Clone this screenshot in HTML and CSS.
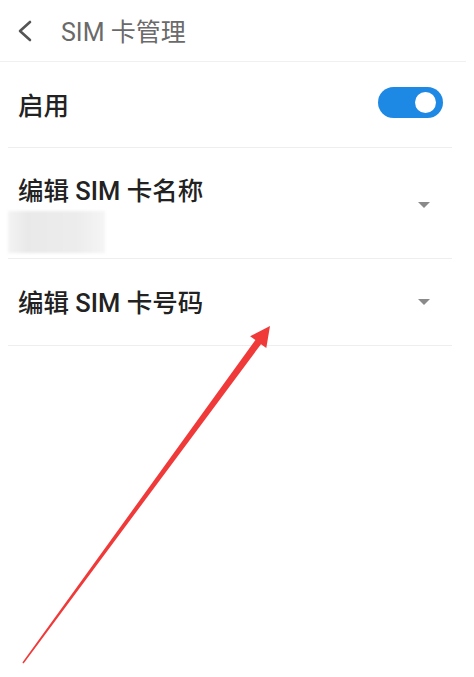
FILE: index.html
```html
<!DOCTYPE html>
<html lang="zh-CN">
<head>
  <meta charset="UTF-8" />
  <meta name="viewport" content="width=device-width, initial-scale=1.0"/>
  <title>SIM 卡管理</title>
  <link rel="stylesheet" href="styles.css">
</head>
<body>
  <div class="header">
    <svg class="back-icon" width="16" height="22" viewBox="0 0 16 22">
      <path d="M13 2 L3 11 L13 20" fill="none" stroke="#555" stroke-width="2.6" stroke-linecap="round" stroke-linejoin="round"/>
    </svg>
    <span class="header-title">SIM 卡管理</span>
  </div>

  <div class="list">
    <div class="row row-switch">
      <span class="row-label">启用</span>
      <div class="switch on"><span class="knob"></span></div>
    </div>

    <div class="row row-name">
      <div class="row-text">
        <span class="row-label">编辑 SIM 卡名称</span>
        <div class="blurred"></div>
      </div>
      <span class="caret"></span>
    </div>

    <div class="row row-number">
      <span class="row-label">编辑 SIM 卡号码</span>
      <span class="caret"></span>
    </div>
  </div>

  <svg class="pointer" width="474" height="677" viewBox="0 0 474 677">
    <polygon points="22.4,662.6 255.4,340 250.1,336.2 270,326 266.3,348 261,344.2 23.6,663.4" fill="#f03a3a"/>
  </svg>
</body>
</html>
```

FILE: styles.css
```css
body {
  margin: 0;
  background-color: #fff;
  font-family: Roboto, "Noto Sans CJK SC", sans-serif;
  position: relative;
  height: 677px;
  overflow: hidden;
}
.header {
  display: flex;
  align-items: center;
  height: 61px;
  margin-right: 8px;
  border-bottom: 1px solid #f0f0f0;
}
.back-icon {
  margin-left: 17px;
  margin-top: 1px;
}
.header-title {
  margin-left: 28px;
  font-size: 25px;
  color: #6a6a6a;
  padding-bottom: 2px;
}
.list {
  margin: 0 22px 0 8px;
}
.row {
  display: flex;
  align-items: center;
  justify-content: space-between;
  padding: 0 9px 0 10px;
  border-bottom: 1px solid #eeeeee;
}
.row-label {
  font-size: 25.5px;
  font-weight: 500;
  color: #222;
}
.row-switch {
  height: 85px;
}
.row-switch .row-label {
  padding-bottom: 2px;
}
.switch {
  width: 65px;
  height: 31px;
  border-radius: 16px;
  background-color: #1e88e5;
  display: flex;
  align-items: center;
  justify-content: flex-end;
  margin-bottom: 4px;
}
.knob {
  width: 21px;
  height: 21px;
  border-radius: 50%;
  background-color: #fff;
  margin-right: 7px;
}
.row-name {
  height: 110px;
  padding-right: 22px;
}
.row-text {
  display: flex;
  flex-direction: column;
  padding-top: 16px;
}
.blurred {
  width: 97px;
  height: 42px;
  margin: 4px 0 0 -10px;
  background: linear-gradient(90deg, #f3f3f3 0, #e9e9e9 20%, #ececec 70%, #f5f5f5 100%);
  filter: blur(1.5px);
}
.row-number {
  height: 86px;
  padding-right: 22px;
}
.row-number .row-label {
  padding-bottom: 4px;
}
.caret {
  width: 0;
  height: 0;
  border-left: 6px solid transparent;
  border-right: 6px solid transparent;
  border-top: 6px solid #8a8a8a;
}
.row-name .caret {
  margin-top: 4px;
}
.pointer {
  position: absolute;
  left: 0;
  top: 0;
  pointer-events: none;
}
```
